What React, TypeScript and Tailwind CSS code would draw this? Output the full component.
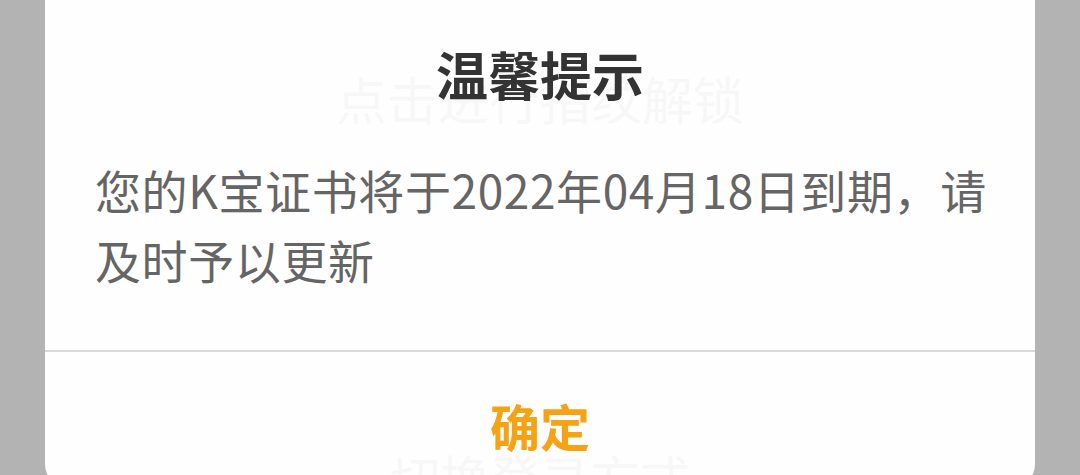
import React from "react";

export default function App() {
  return (
    <div
      className="w-[1080px] h-[475px] overflow-hidden bg-[#b3b3b3] px-[45px]"
      style={{ fontFamily: '"Noto Sans CJK SC", "Noto Sans", sans-serif' }}
    >
      <div className="relative h-[488px] w-[990px] rounded-b-[24px] bg-[#fefefe] flex flex-col">
        <div className="pointer-events-none absolute left-0 right-0 top-[68px] text-center text-[51px] leading-[60px] text-[#f7f7f7]">
          点击进行指纹解锁
        </div>
        <div className="pointer-events-none absolute left-0 right-0 top-[446px] text-center text-[50px] leading-[60px] text-[#f7f7f7]">
          切换登录方式
        </div>
        <div className="relative pt-[44px] text-center text-[52px] font-bold leading-[60px] text-[#333333]">
          温馨提示
        </div>
        <div className="relative mt-[50px] pl-[50px] pr-[40px] text-[46px] leading-[70px] tracking-[0.6px] text-[#656565]">
          您的K宝证书将于2022年04月18日到期，请及时予以更新
        </div>
        <div className="relative mt-[56px] h-[2px] bg-[#d9d9d9]" />
        <div className="relative flex flex-1 justify-center pt-[45px]">
          <span className="text-[50px] font-bold leading-[56px] text-[#f5a314]">确定</span>
        </div>
      </div>
    </div>
  );
}
